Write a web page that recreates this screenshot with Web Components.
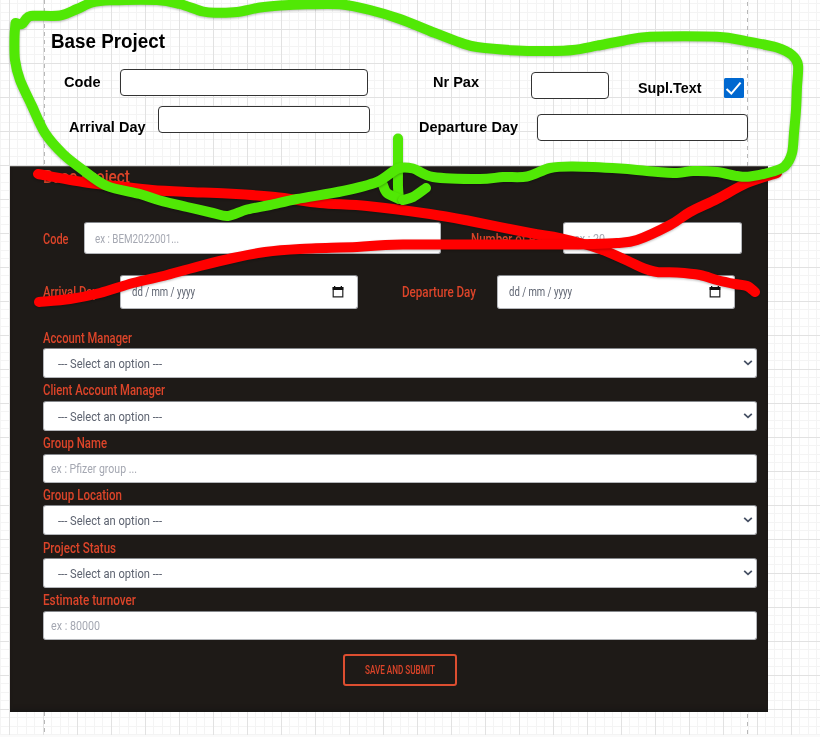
<!DOCTYPE html>
<html lang="en">
<head>
<meta charset="utf-8">
<title>Base Project</title>
<style>
html,body{margin:0;width:820px;height:737px;overflow:hidden;background:#fff}
</style>
</head>
<body>
<project-board></project-board>
<script>
function define(name, html, setup) {
  const t = document.createElement('template');
  t.innerHTML = html;
  customElements.define(name, class extends HTMLElement {
    connectedCallback() {
      if (this.shadowRoot) return;
      this.attachShadow({mode: 'open'}).append(t.content.cloneNode(true));
      if (setup) setup(this, this.shadowRoot);
    }
  });
}

/* Single-line text condensed or widened to the width given in "w". */
define('fit-text', `<style>
:host{display:inline-block;flex:none;white-space:nowrap}
span{display:inline-block;transform-origin:0 50%}
</style><span></span>`, (el, root) => {
  const s = root.querySelector('span');
  s.textContent = el.getAttribute('text');
  const w = +el.getAttribute('w');
  const natural = s.offsetWidth ? s.getBoundingClientRect().width : w;
  s.style.transform = `scaleX(${w / natural})`;
  el.style.width = w + 'px';
});

define('sketch-label', `<style>
:host{display:block;position:absolute;left:var(--x);top:var(--y);font:bold 14px/20px "Liberation Sans",Arial,sans-serif;color:#000}
:host([large]){font-size:19.5px;line-height:24px}
</style><slot></slot>`);

define('sketch-box', `<style>
:host{display:block;position:absolute;box-sizing:border-box;left:var(--x);top:var(--y);width:var(--w);height:27px;border:1px solid #333;border-radius:4px;background:#fff}
</style>`);

define('sketch-check', `<style>
:host{display:block;position:absolute;left:724px;top:78px;width:19.5px;height:19.5px;background:#0068d0;border-radius:1.5px}
svg{display:block;width:100%;height:100%}
</style><svg viewBox="0 0 20 20"><path d="M2.6 11.2 7.5 16 17 4.7" fill="none" stroke="#fff" stroke-width="2.1"/></svg>`);

define('form-label', `<style>
:host{display:flex;align-items:center;flex:none;box-sizing:border-box;height:22.7px;padding-top:1.6px;color:#dc4429;font:500 14px/20px Roboto,sans-serif}
</style><slot></slot>`);

define('form-field', `<style>
:host{display:flex;align-items:center;flex:none;box-sizing:border-box;width:var(--w,714px);height:var(--h,30px);padding:1.6px 7px 0 var(--pad,8px);background:#fff;border:1px solid #b4b6ba;border-top-color:#85888c;border-radius:3px;color:#5d6370;font:400 13px/20px Roboto,sans-serif;justify-content:space-between}
:host([hint]){color:#a5a8b2}
svg{flex:none;display:none}
:host([kind=select]){padding-right:3px}
:host([kind=date]){padding-right:13px}
:host([kind=select]) .chev,:host([kind=date]) .cal{display:block;margin-top:-1.6px}
</style><slot></slot>
<svg class="chev" width="10" height="8" viewBox="0 0 10 8"><path d="M1.2 1.9 5 5.3 8.8 1.9" fill="none" stroke="#465064" stroke-width="1.8"/></svg>
<svg class="cal" width="12" height="14" viewBox="0 0 12 14"><path d="M1.2 2.5h9.6v9.3H1.2z" fill="none" stroke="#222" stroke-width="1.2"/><path d="M.7 2h10.6v2.9H.7zM2 1h1.3v1.5H2zM8.7 1H10v1.5H8.7z" fill="#111"/></svg>`);

define('submit-button', `<style>
:host{display:flex;box-sizing:border-box;align-items:center;justify-content:center;width:114px;height:32.5px;border:2px solid #dd4e30;border-radius:3px;color:#dc4429;font:500 12px/20px Roboto,sans-serif}
</style><slot></slot>`);

define('project-form', `<style>
:host{display:block;box-sizing:border-box;width:758px;height:546px;padding-left:33px;background:#1e1a17;box-shadow:inset 0 1px #55524f,inset 0 -5px 4px -2px #191716;overflow:hidden}
.title{height:56px;font:500 18.5px/22px Roboto,sans-serif;color:#dc4429}
.row{display:flex;align-items:center}
.code{height:32px}
.days{height:34px;margin-top:20.5px}
.stack{display:flex;flex-direction:column;margin-top:17px}
submit-button{margin:13.5px 0 0 300px}
</style>
<div class="title"><fit-text text="Base Project" w="87"></fit-text></div>
<div class="row code">
<form-label style="width:41px"><fit-text text="Code" w="25.5"></fit-text></form-label>
<form-field hint style="--w:357px;--h:32px;--pad:10px"><fit-text text="ex : BEM2022001..." w="84"></fit-text></form-field>
<form-label style="width:92px;margin-left:30px"><fit-text text="Number of Pax" w="77"></fit-text></form-label>
<form-field hint style="--w:179px;--h:32px;--pad:10px"><fit-text text="ex : 20" w="31"></fit-text></form-field>
</div>
<div class="row days">
<form-label style="width:76.5px"><fit-text text="Arrival Day" w="55"></fit-text></form-label>
<form-field kind="date" style="--w:238px;--h:34px;--pad:11px"><fit-text text="dd / mm / yyyy" w="63"></fit-text></form-field>
<form-label style="width:95.5px;margin-left:44px"><fit-text text="Departure Day" w="74"></fit-text></form-label>
<form-field kind="date" style="--w:238px;--h:34px;--pad:11px"><fit-text text="dd / mm / yyyy" w="63"></fit-text></form-field>
</div>
<div class="stack">
<form-label><fit-text text="Account Manager" w="89"></fit-text></form-label>
<form-field kind="select" style="--pad:14px"><fit-text text="--- Select an option ---" w="104"></fit-text></form-field>
<form-label><fit-text text="Client Account Manager" w="122"></fit-text></form-label>
<form-field kind="select" style="--pad:14px"><fit-text text="--- Select an option ---" w="104"></fit-text></form-field>
<form-label><fit-text text="Group Name" w="64"></fit-text></form-label>
<form-field hint style="--h:29.2px;--pad:7px"><fit-text text="ex : Pfizer group ..." w="86"></fit-text></form-field>
<form-label><fit-text text="Group Location" w="79"></fit-text></form-label>
<form-field kind="select" style="--pad:14px"><fit-text text="--- Select an option ---" w="104"></fit-text></form-field>
<form-label><fit-text text="Project Status" w="73"></fit-text></form-label>
<form-field kind="select" style="--pad:14px"><fit-text text="--- Select an option ---" w="104"></fit-text></form-field>
<form-label><fit-text text="Estimate turnover" w="93"></fit-text></form-label>
<form-field hint style="--h:29.2px;--pad:7px"><fit-text text="ex : 80000" w="49"></fit-text></form-field>
</div>
<submit-button><fit-text text="SAVE AND SUBMIT" w="70"></fit-text></submit-button>`);

/* Freehand pen strokes laid over the board. */
define('pen-marks', `<style>
:host{position:absolute;inset:0;display:block;pointer-events:none}
svg{display:block}
path{fill:none;stroke-width:10;stroke-linecap:round;stroke-linejoin:round;filter:drop-shadow(0 1.2px 1px rgba(0,0,0,.28))}
</style><svg width="820" height="737"></svg>`, (el, root) => {
  const strokes = [
    ['#f00', '38,174 83,182 117,186 152,190 187,192 227,193.5 275,197 320,203 367,206 430,214 470,221 530,233 560,238 600,249 630,262 643,268 657,272 677,272.5 700,275 717,280 735,284 747,286 755,292'],
    ['#f00', '39,302 70,299 100,293 133,283 167,275 200,266 233,258 265,252 300,249 357,247 403,244.5 550,244.5 590,244 617,243 637,240 670,225 690,212 717,199 747,183 777,173'],
    ['#51e805', '398,138.5 398,167 398,187 399,199'],
    ['#51e805', '383,185 387,193 399,199'],
    ['#51e805', '403,200 413,197 426,188'],
    ['#51e805', '15.5,23 22,24 27,18 33,15.7 60,15.5 77,9 92,2.5 110,.3 157,0 180,4 203,11.5 217,12.7 237,12 260,7.5 280,5.5 307,4.3 340,4.3 370,10 400,19 430,31 460,42.5 477,47 517,50.5 550,51 573,50 597,45.7 623,40.7 650,36.7 717,36.7 747,41.3 777,47.5 792,55 798,65 797,87 796,110 794,133 792,153 785,166 773,171.5 750,176.5 737,176 717,172 693,171 677,173 647,171 620,168.5 573,166.5 550,168 527,176.5 503,177 480,179 433,177 413,168.5 398,168.5 377,182 343,191 297,199 270,205 247,209.5 228,216 213,213 187,207 160,200.5 140,194 107,186 83,170 63,154 45,133 32,106 20,80 15,60 14.5,37 15.5,23']
  ];
  const NS = 'http://www.w3.org/2000/svg';
  for (const [color, list] of strokes) {
    const p = list.split(' ').map(s => s.split(',').map(Number));
    let d = `M${p[0]}`;
    for (let i = 0; i < p.length - 1; i++) {
      const a = p[i - 1] || p[i], b = p[i], c = p[i + 1], e = p[i + 2] || c;
      const k = 6.5;
      d += `C${b[0] + (c[0] - a[0]) / k},${b[1] + (c[1] - a[1]) / k} ${c[0] - (e[0] - b[0]) / k},${c[1] - (e[1] - b[1]) / k} ${c}`;
    }
    const path = document.createElementNS(NS, 'path');
    path.setAttribute('d', d);
    path.setAttribute('stroke', color);
    root.querySelector('svg').append(path);
  }
});

define('project-board', `<style>
:host{display:block;position:relative;box-sizing:border-box;width:820px;height:737px;padding:166px 0 0 10px;overflow:hidden;background:#fff}
.grid{position:absolute;inset:0}
project-form{position:relative}
</style>
<svg class="grid" width="820" height="737">
<defs><pattern id="g" x="9" y="29" width="34" height="34" patternUnits="userSpaceOnUse">
<path d="M8.5 0v34M17.5 0v34M25.5 0v34M0 8.5h34M0 17.5h34M0 25.5h34" stroke="#f4f4f4"/>
<path d="M.5 0v34M0 .5h34" stroke="#e2e2e2"/></pattern></defs>
<rect width="820" height="735" fill="url(#g)"/><rect y="735" width="820" height="2" fill="#fafafa"/>
<path d="M44.5 0V735M747.5 2V735" stroke="#b8b8b8" stroke-dasharray="4 4"/>
</svg>
<sketch-label large style="--x:51px;--y:29px"><fit-text text="Base Project" w="114"></fit-text></sketch-label>
<sketch-label style="--x:64px;--y:72px"><fit-text text="Code" w="36.5"></fit-text></sketch-label>
<sketch-box style="--x:120px;--y:69px;--w:248px"></sketch-box>
<sketch-label style="--x:433px;--y:72px"><fit-text text="Nr Pax" w="46"></fit-text></sketch-label>
<sketch-box style="--x:531px;--y:72px;--w:78px"></sketch-box>
<sketch-label style="--x:638px;--y:78px"><fit-text text="Supl.Text" w="63.5"></fit-text></sketch-label>
<sketch-check></sketch-check>
<sketch-label style="--x:69px;--y:117px"><fit-text text="Arrival Day" w="76.5"></fit-text></sketch-label>
<sketch-box style="--x:158px;--y:106px;--w:212px"></sketch-box>
<sketch-label style="--x:419px;--y:117px"><fit-text text="Departure Day" w="99"></fit-text></sketch-label>
<sketch-box style="--x:537px;--y:114px;--w:211px"></sketch-box>
<project-form></project-form>
<pen-marks></pen-marks>`);
</script>
</body>
</html>
